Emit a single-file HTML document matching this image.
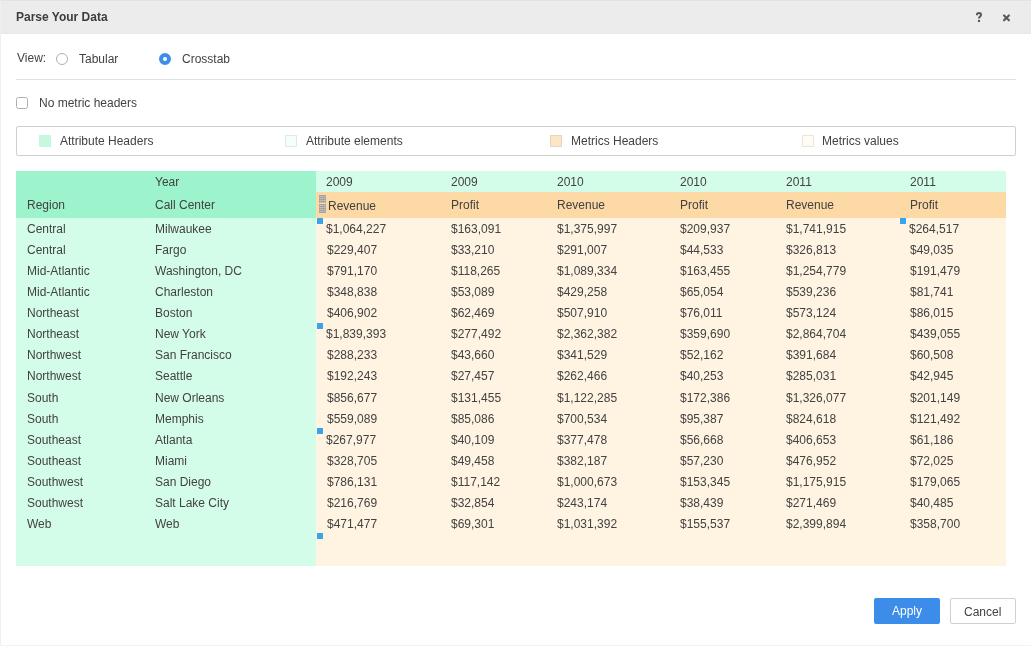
<!DOCTYPE html>
<html><head><meta charset="utf-8">
<style>
html,body{margin:0;padding:0}
body{width:1031px;height:646px;position:relative;overflow:hidden;background:#fff;font-family:"Liberation Sans",sans-serif;font-size:12px;color:#424242}
.a{position:absolute}
.t{position:absolute;line-height:14px;white-space:nowrap;will-change:transform}
.b{font-weight:bold;color:#3c3c3c}
</style></head><body>
<div class="a" style="left:0;top:0;width:1031px;height:34px;background:#ececec"></div>
<div class="a" style="left:0;top:0;width:1031px;height:1px;background:#e3e3e3"></div>
<div class="a" style="left:0;top:33px;width:1031px;height:1px;background:#e8e8e8"></div>
<div class="a" style="left:0;top:0;width:1px;height:646px;background:#efefef"></div>
<div class="a" style="left:0;top:645px;width:1031px;height:1px;background:#f2f2f2"></div>
<!-- help & close -->
<svg class="a" style="left:970px;top:8px" width="45" height="18" viewBox="0 0 45 18">
<path d="M6.9 7.3C6.9 5.8 7.8 5.1 9 5.1C10.2 5.1 11 5.8 11 6.9C11 8.3 9 8.6 9 10.4" fill="none" stroke="#585858" stroke-width="2"/>
<circle cx="9" cy="12.9" r="1.2" fill="#585858"/>
<path d="M34 7.4L38.9 12.3M38.9 7.4L34 12.3" stroke="#585858" stroke-width="2.1" stroke-linecap="round"/>
</svg>
<!-- view row -->
<div class="t" style="left:17px;top:51px">View:</div>
<div class="a" style="left:56px;top:53px;width:10px;height:10px;border:1px solid #aeb0b3;border-radius:50%"></div>
<div class="t" style="left:79px;top:52px">Tabular</div>
<div class="a" style="left:159px;top:53px;width:4px;height:4px;border:4px solid #3d8ee8;border-radius:50%;background:#fff"></div>
<div class="t" style="left:182px;top:52px">Crosstab</div>
<div class="a" style="left:16px;top:79px;width:1000px;height:1px;background:#e1e1e1"></div>
<!-- checkbox -->
<div class="a" style="left:16px;top:97px;width:10px;height:10px;border:1px solid #aeb1b4;border-radius:2.5px"></div>
<div class="t" style="left:39px;top:96px">No metric headers</div>
<!-- legend -->
<div class="a" style="left:16px;top:126px;width:998px;height:28px;border:1px solid #cfcfcf;border-radius:2px"></div>
<div class="a" style="left:39px;top:135px;width:12px;height:12px;background:#c6f7df"></div>
<div class="t" style="left:60px;top:134px">Attribute Headers</div>
<div class="a" style="left:285px;top:135px;width:10px;height:10px;background:#f4fffa;border:1px solid #dfebe6"></div>
<div class="t" style="left:306px;top:134px">Attribute elements</div>
<div class="a" style="left:550px;top:135px;width:10px;height:10px;background:#fde6c8;border:1px solid #e6d6bd"></div>
<div class="t" style="left:571px;top:134px">Metrics Headers</div>
<div class="a" style="left:802px;top:135px;width:10px;height:10px;background:#fffcf4;border:1px solid #e9e6e1"></div>
<div class="t" style="left:822px;top:134px">Metrics values</div>
<!-- table backgrounds -->
<div class="a" style="left:16px;top:171px;width:300px;height:47px;background:#9df3cb"></div>
<div class="a" style="left:16px;top:218px;width:300px;height:348px;background:#d4fde9"></div>
<div class="a" style="left:316px;top:171px;width:690px;height:21px;background:#d4fde9"></div>
<div class="a" style="left:316px;top:192px;width:690px;height:26px;background:#fcd9a5"></div>
<div class="a" style="left:316px;top:218px;width:690px;height:348px;background:#fff3e2"></div>
<svg class="a" style="left:318.5px;top:195px" width="7" height="18" viewBox="0 0 7 18" shape-rendering="crispEdges"><rect x="0" y="0" width="1" height="1" fill="#a0a2a8"/><rect x="1" y="0" width="1" height="1" fill="#a0a2a8"/><rect x="2" y="0" width="1" height="1" fill="#a0a2a8"/><rect x="3" y="0" width="1" height="1" fill="#a0a2a8"/><rect x="4" y="0" width="1" height="1" fill="#a0a2a8"/><rect x="5" y="0" width="1" height="1" fill="#a0a2a8"/><rect x="6" y="0" width="1" height="1" fill="#a0a2a8"/><rect x="0" y="1" width="1" height="1" fill="#b8b0a6"/><rect x="1" y="1" width="1" height="1" fill="#d2c2aa"/><rect x="2" y="1" width="1" height="1" fill="#b8b0a6"/><rect x="3" y="1" width="1" height="1" fill="#d2c2aa"/><rect x="4" y="1" width="1" height="1" fill="#b8b0a6"/><rect x="5" y="1" width="1" height="1" fill="#d2c2aa"/><rect x="6" y="1" width="1" height="1" fill="#b8b0a6"/><rect x="0" y="2" width="1" height="1" fill="#a0a2a8"/><rect x="1" y="2" width="1" height="1" fill="#a0a2a8"/><rect x="2" y="2" width="1" height="1" fill="#a0a2a8"/><rect x="3" y="2" width="1" height="1" fill="#a0a2a8"/><rect x="4" y="2" width="1" height="1" fill="#a0a2a8"/><rect x="5" y="2" width="1" height="1" fill="#a0a2a8"/><rect x="6" y="2" width="1" height="1" fill="#a0a2a8"/><rect x="0" y="3" width="1" height="1" fill="#b8b0a6"/><rect x="1" y="3" width="1" height="1" fill="#d2c2aa"/><rect x="2" y="3" width="1" height="1" fill="#b8b0a6"/><rect x="3" y="3" width="1" height="1" fill="#d2c2aa"/><rect x="4" y="3" width="1" height="1" fill="#b8b0a6"/><rect x="5" y="3" width="1" height="1" fill="#d2c2aa"/><rect x="6" y="3" width="1" height="1" fill="#b8b0a6"/><rect x="0" y="4" width="1" height="1" fill="#a0a2a8"/><rect x="1" y="4" width="1" height="1" fill="#a0a2a8"/><rect x="2" y="4" width="1" height="1" fill="#a0a2a8"/><rect x="3" y="4" width="1" height="1" fill="#a0a2a8"/><rect x="4" y="4" width="1" height="1" fill="#a0a2a8"/><rect x="5" y="4" width="1" height="1" fill="#a0a2a8"/><rect x="6" y="4" width="1" height="1" fill="#a0a2a8"/><rect x="0" y="5" width="1" height="1" fill="#b8b0a6"/><rect x="1" y="5" width="1" height="1" fill="#d2c2aa"/><rect x="2" y="5" width="1" height="1" fill="#b8b0a6"/><rect x="3" y="5" width="1" height="1" fill="#d2c2aa"/><rect x="4" y="5" width="1" height="1" fill="#b8b0a6"/><rect x="5" y="5" width="1" height="1" fill="#d2c2aa"/><rect x="6" y="5" width="1" height="1" fill="#b8b0a6"/><rect x="0" y="6" width="1" height="1" fill="#a0a2a8"/><rect x="1" y="6" width="1" height="1" fill="#a0a2a8"/><rect x="2" y="6" width="1" height="1" fill="#a0a2a8"/><rect x="3" y="6" width="1" height="1" fill="#a0a2a8"/><rect x="4" y="6" width="1" height="1" fill="#a0a2a8"/><rect x="5" y="6" width="1" height="1" fill="#a0a2a8"/><rect x="6" y="6" width="1" height="1" fill="#a0a2a8"/><rect x="0" y="7" width="1" height="1" fill="#b8b0a6"/><rect x="1" y="7" width="1" height="1" fill="#d2c2aa"/><rect x="2" y="7" width="1" height="1" fill="#b8b0a6"/><rect x="3" y="7" width="1" height="1" fill="#d2c2aa"/><rect x="4" y="7" width="1" height="1" fill="#b8b0a6"/><rect x="5" y="7" width="1" height="1" fill="#d2c2aa"/><rect x="6" y="7" width="1" height="1" fill="#b8b0a6"/><rect x="0" y="9" width="1" height="1" fill="#a0a2a8"/><rect x="1" y="9" width="1" height="1" fill="#a0a2a8"/><rect x="2" y="9" width="1" height="1" fill="#a0a2a8"/><rect x="3" y="9" width="1" height="1" fill="#a0a2a8"/><rect x="4" y="9" width="1" height="1" fill="#a0a2a8"/><rect x="5" y="9" width="1" height="1" fill="#a0a2a8"/><rect x="6" y="9" width="1" height="1" fill="#a0a2a8"/><rect x="0" y="10" width="1" height="1" fill="#b8b0a6"/><rect x="1" y="10" width="1" height="1" fill="#d2c2aa"/><rect x="2" y="10" width="1" height="1" fill="#b8b0a6"/><rect x="3" y="10" width="1" height="1" fill="#d2c2aa"/><rect x="4" y="10" width="1" height="1" fill="#b8b0a6"/><rect x="5" y="10" width="1" height="1" fill="#d2c2aa"/><rect x="6" y="10" width="1" height="1" fill="#b8b0a6"/><rect x="0" y="11" width="1" height="1" fill="#a0a2a8"/><rect x="1" y="11" width="1" height="1" fill="#a0a2a8"/><rect x="2" y="11" width="1" height="1" fill="#a0a2a8"/><rect x="3" y="11" width="1" height="1" fill="#a0a2a8"/><rect x="4" y="11" width="1" height="1" fill="#a0a2a8"/><rect x="5" y="11" width="1" height="1" fill="#a0a2a8"/><rect x="6" y="11" width="1" height="1" fill="#a0a2a8"/><rect x="0" y="12" width="1" height="1" fill="#b8b0a6"/><rect x="1" y="12" width="1" height="1" fill="#d2c2aa"/><rect x="2" y="12" width="1" height="1" fill="#b8b0a6"/><rect x="3" y="12" width="1" height="1" fill="#d2c2aa"/><rect x="4" y="12" width="1" height="1" fill="#b8b0a6"/><rect x="5" y="12" width="1" height="1" fill="#d2c2aa"/><rect x="6" y="12" width="1" height="1" fill="#b8b0a6"/><rect x="0" y="13" width="1" height="1" fill="#a0a2a8"/><rect x="1" y="13" width="1" height="1" fill="#a0a2a8"/><rect x="2" y="13" width="1" height="1" fill="#a0a2a8"/><rect x="3" y="13" width="1" height="1" fill="#a0a2a8"/><rect x="4" y="13" width="1" height="1" fill="#a0a2a8"/><rect x="5" y="13" width="1" height="1" fill="#a0a2a8"/><rect x="6" y="13" width="1" height="1" fill="#a0a2a8"/><rect x="0" y="14" width="1" height="1" fill="#b8b0a6"/><rect x="1" y="14" width="1" height="1" fill="#d2c2aa"/><rect x="2" y="14" width="1" height="1" fill="#b8b0a6"/><rect x="3" y="14" width="1" height="1" fill="#d2c2aa"/><rect x="4" y="14" width="1" height="1" fill="#b8b0a6"/><rect x="5" y="14" width="1" height="1" fill="#d2c2aa"/><rect x="6" y="14" width="1" height="1" fill="#b8b0a6"/><rect x="0" y="15" width="1" height="1" fill="#a0a2a8"/><rect x="1" y="15" width="1" height="1" fill="#a0a2a8"/><rect x="2" y="15" width="1" height="1" fill="#a0a2a8"/><rect x="3" y="15" width="1" height="1" fill="#a0a2a8"/><rect x="4" y="15" width="1" height="1" fill="#a0a2a8"/><rect x="5" y="15" width="1" height="1" fill="#a0a2a8"/><rect x="6" y="15" width="1" height="1" fill="#a0a2a8"/><rect x="0" y="16" width="1" height="1" fill="#b8b0a6"/><rect x="1" y="16" width="1" height="1" fill="#d2c2aa"/><rect x="2" y="16" width="1" height="1" fill="#b8b0a6"/><rect x="3" y="16" width="1" height="1" fill="#d2c2aa"/><rect x="4" y="16" width="1" height="1" fill="#b8b0a6"/><rect x="5" y="16" width="1" height="1" fill="#d2c2aa"/><rect x="6" y="16" width="1" height="1" fill="#b8b0a6"/><rect x="0" y="17" width="1" height="1" fill="#a0a2a8"/><rect x="1" y="17" width="1" height="1" fill="#a0a2a8"/><rect x="2" y="17" width="1" height="1" fill="#a0a2a8"/><rect x="3" y="17" width="1" height="1" fill="#a0a2a8"/><rect x="4" y="17" width="1" height="1" fill="#a0a2a8"/><rect x="5" y="17" width="1" height="1" fill="#a0a2a8"/><rect x="6" y="17" width="1" height="1" fill="#a0a2a8"/></svg>
<!-- blue markers -->
<div class="a" style="left:317px;top:218px;width:6px;height:6px;background:#36a5ec"></div>
<div class="a" style="left:900px;top:218px;width:6px;height:6px;background:#36a5ec"></div>
<div class="a" style="left:317px;top:323px;width:6px;height:6px;background:#36a5ec"></div>
<div class="a" style="left:317px;top:428px;width:6px;height:6px;background:#36a5ec"></div>
<div class="a" style="left:317px;top:533px;width:6px;height:6px;background:#36a5ec"></div>
<div class="t b" style="left:16px;top:10px">Parse Your Data</div>
<div class="t" style="left:155px;top:175px">Year</div>
<div class="t" style="left:326px;top:175px">2009</div>
<div class="t" style="left:451px;top:175px">2009</div>
<div class="t" style="left:557px;top:175px">2010</div>
<div class="t" style="left:680px;top:175px">2010</div>
<div class="t" style="left:786px;top:175px">2011</div>
<div class="t" style="left:910px;top:175px">2011</div>
<div class="t" style="left:27px;top:198px">Region</div>
<div class="t" style="left:155px;top:198px">Call Center</div>
<div class="t" style="left:328px;top:199px">Revenue</div>
<div class="t" style="left:451px;top:198px">Profit</div>
<div class="t" style="left:557px;top:198px">Revenue</div>
<div class="t" style="left:680px;top:198px">Profit</div>
<div class="t" style="left:786px;top:198px">Revenue</div>
<div class="t" style="left:910px;top:198px">Profit</div>
<div class="t" style="left:27px;top:222px">Central</div>
<div class="t" style="left:155px;top:222px">Milwaukee</div>
<div class="t" style="left:326px;top:222px">$1,064,227</div>
<div class="t" style="left:451px;top:222px">$163,091</div>
<div class="t" style="left:557px;top:222px">$1,375,997</div>
<div class="t" style="left:680px;top:222px">$209,937</div>
<div class="t" style="left:786px;top:222px">$1,741,915</div>
<div class="t" style="left:909px;top:222px">$264,517</div>
<div class="t" style="left:27px;top:243px">Central</div>
<div class="t" style="left:155px;top:243px">Fargo</div>
<div class="t" style="left:327px;top:243px">$229,407</div>
<div class="t" style="left:451px;top:243px">$33,210</div>
<div class="t" style="left:557px;top:243px">$291,007</div>
<div class="t" style="left:680px;top:243px">$44,533</div>
<div class="t" style="left:786px;top:243px">$326,813</div>
<div class="t" style="left:910px;top:243px">$49,035</div>
<div class="t" style="left:27px;top:264px">Mid-Atlantic</div>
<div class="t" style="left:155px;top:264px">Washington, DC</div>
<div class="t" style="left:327px;top:264px">$791,170</div>
<div class="t" style="left:451px;top:264px">$118,265</div>
<div class="t" style="left:557px;top:264px">$1,089,334</div>
<div class="t" style="left:680px;top:264px">$163,455</div>
<div class="t" style="left:786px;top:264px">$1,254,779</div>
<div class="t" style="left:910px;top:264px">$191,479</div>
<div class="t" style="left:27px;top:285px">Mid-Atlantic</div>
<div class="t" style="left:155px;top:285px">Charleston</div>
<div class="t" style="left:327px;top:285px">$348,838</div>
<div class="t" style="left:451px;top:285px">$53,089</div>
<div class="t" style="left:557px;top:285px">$429,258</div>
<div class="t" style="left:680px;top:285px">$65,054</div>
<div class="t" style="left:786px;top:285px">$539,236</div>
<div class="t" style="left:910px;top:285px">$81,741</div>
<div class="t" style="left:27px;top:306px">Northeast</div>
<div class="t" style="left:155px;top:306px">Boston</div>
<div class="t" style="left:327px;top:306px">$406,902</div>
<div class="t" style="left:451px;top:306px">$62,469</div>
<div class="t" style="left:557px;top:306px">$507,910</div>
<div class="t" style="left:680px;top:306px">$76,011</div>
<div class="t" style="left:786px;top:306px">$573,124</div>
<div class="t" style="left:910px;top:306px">$86,015</div>
<div class="t" style="left:27px;top:327px">Northeast</div>
<div class="t" style="left:155px;top:327px">New York</div>
<div class="t" style="left:326px;top:327px">$1,839,393</div>
<div class="t" style="left:451px;top:327px">$277,492</div>
<div class="t" style="left:557px;top:327px">$2,362,382</div>
<div class="t" style="left:680px;top:327px">$359,690</div>
<div class="t" style="left:786px;top:327px">$2,864,704</div>
<div class="t" style="left:910px;top:327px">$439,055</div>
<div class="t" style="left:27px;top:348px">Northwest</div>
<div class="t" style="left:155px;top:348px">San Francisco</div>
<div class="t" style="left:327px;top:348px">$288,233</div>
<div class="t" style="left:451px;top:348px">$43,660</div>
<div class="t" style="left:557px;top:348px">$341,529</div>
<div class="t" style="left:680px;top:348px">$52,162</div>
<div class="t" style="left:786px;top:348px">$391,684</div>
<div class="t" style="left:910px;top:348px">$60,508</div>
<div class="t" style="left:27px;top:369px">Northwest</div>
<div class="t" style="left:155px;top:369px">Seattle</div>
<div class="t" style="left:327px;top:369px">$192,243</div>
<div class="t" style="left:451px;top:369px">$27,457</div>
<div class="t" style="left:557px;top:369px">$262,466</div>
<div class="t" style="left:680px;top:369px">$40,253</div>
<div class="t" style="left:786px;top:369px">$285,031</div>
<div class="t" style="left:910px;top:369px">$42,945</div>
<div class="t" style="left:27px;top:391px">South</div>
<div class="t" style="left:155px;top:391px">New Orleans</div>
<div class="t" style="left:327px;top:391px">$856,677</div>
<div class="t" style="left:451px;top:391px">$131,455</div>
<div class="t" style="left:557px;top:391px">$1,122,285</div>
<div class="t" style="left:680px;top:391px">$172,386</div>
<div class="t" style="left:786px;top:391px">$1,326,077</div>
<div class="t" style="left:910px;top:391px">$201,149</div>
<div class="t" style="left:27px;top:412px">South</div>
<div class="t" style="left:155px;top:412px">Memphis</div>
<div class="t" style="left:327px;top:412px">$559,089</div>
<div class="t" style="left:451px;top:412px">$85,086</div>
<div class="t" style="left:557px;top:412px">$700,534</div>
<div class="t" style="left:680px;top:412px">$95,387</div>
<div class="t" style="left:786px;top:412px">$824,618</div>
<div class="t" style="left:910px;top:412px">$121,492</div>
<div class="t" style="left:27px;top:433px">Southeast</div>
<div class="t" style="left:155px;top:433px">Atlanta</div>
<div class="t" style="left:326px;top:433px">$267,977</div>
<div class="t" style="left:451px;top:433px">$40,109</div>
<div class="t" style="left:557px;top:433px">$377,478</div>
<div class="t" style="left:680px;top:433px">$56,668</div>
<div class="t" style="left:786px;top:433px">$406,653</div>
<div class="t" style="left:910px;top:433px">$61,186</div>
<div class="t" style="left:27px;top:454px">Southeast</div>
<div class="t" style="left:155px;top:454px">Miami</div>
<div class="t" style="left:327px;top:454px">$328,705</div>
<div class="t" style="left:451px;top:454px">$49,458</div>
<div class="t" style="left:557px;top:454px">$382,187</div>
<div class="t" style="left:680px;top:454px">$57,230</div>
<div class="t" style="left:786px;top:454px">$476,952</div>
<div class="t" style="left:910px;top:454px">$72,025</div>
<div class="t" style="left:27px;top:475px">Southwest</div>
<div class="t" style="left:155px;top:475px">San Diego</div>
<div class="t" style="left:327px;top:475px">$786,131</div>
<div class="t" style="left:451px;top:475px">$117,142</div>
<div class="t" style="left:557px;top:475px">$1,000,673</div>
<div class="t" style="left:680px;top:475px">$153,345</div>
<div class="t" style="left:786px;top:475px">$1,175,915</div>
<div class="t" style="left:910px;top:475px">$179,065</div>
<div class="t" style="left:27px;top:496px">Southwest</div>
<div class="t" style="left:155px;top:496px">Salt Lake City</div>
<div class="t" style="left:327px;top:496px">$216,769</div>
<div class="t" style="left:451px;top:496px">$32,854</div>
<div class="t" style="left:557px;top:496px">$243,174</div>
<div class="t" style="left:680px;top:496px">$38,439</div>
<div class="t" style="left:786px;top:496px">$271,469</div>
<div class="t" style="left:910px;top:496px">$40,485</div>
<div class="t" style="left:27px;top:517px">Web</div>
<div class="t" style="left:155px;top:517px">Web</div>
<div class="t" style="left:327px;top:517px">$471,477</div>
<div class="t" style="left:451px;top:517px">$69,301</div>
<div class="t" style="left:557px;top:517px">$1,031,392</div>
<div class="t" style="left:680px;top:517px">$155,537</div>
<div class="t" style="left:786px;top:517px">$2,399,894</div>
<div class="t" style="left:910px;top:517px">$358,700</div>
<!-- buttons -->
<div class="a" style="left:874px;top:598px;width:66px;height:26px;background:#3b8de9;border-radius:2px"></div>
<div class="t" style="left:892px;top:604px;color:#fff">Apply</div>
<div class="a" style="left:950px;top:598px;width:64px;height:24px;border:1px solid #d0d0d0;border-radius:2px;background:#fff"></div>
<div class="t" style="left:964px;top:605px">Cancel</div>
</body></html>
